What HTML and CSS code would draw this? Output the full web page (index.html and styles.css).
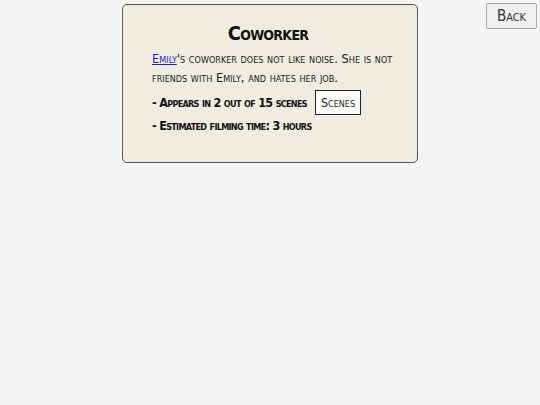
FILE: index.html
```html
<!DOCTYPE html>
<html lang="en">
<head>
  <meta charset="UTF-8" />
  <title>Coworker</title>
  <link rel="stylesheet" href="styles.css">
</head>
<body>

  <button class="back">Back</button>

  <div class="card">
    <h1>Coworker</h1>
    <p class="desc"><a href="#">Emily</a>'s coworker does not like noise. She is not friends with Emily, and hates her job.</p>
    <div class="stat">
      <span>- Appears in 2 out of 15 scenes</span>
      <button class="scenes">Scenes</button>
    </div>
    <div class="stat">
      <span>- Estimated filming time: 3 hours</span>
    </div>
  </div>

</body>
</html>
```

FILE: styles.css
```css
body {
  margin: 0;
  background: #f5f5f5;
  font-family: "DejaVu Sans Condensed", "DejaVu Sans", sans-serif;
  font-stretch: condensed;
  font-variant: small-caps;
  color: #111;
}

.back {
  position: absolute;
  top: 3px;
  right: 3px;
  width: 51px;
  height: 26px;
  background: #f0f0f0;
  border: 1px solid #aaa;
  border-radius: 2px;
  font-family: inherit;
  font-stretch: condensed;
  font-variant: small-caps;
  font-size: 15px;
  color: #333;
  padding: 0;
}

.card {
  width: 255px;
  height: 121px;
  margin: 4px auto 0;
  padding: 13px 10px 23px 29px;
  background: #f0ece0;
  border: 1px solid #555;
  border-radius: 5px;
}

h1 {
  margin: 0 0 0 -23px;
  text-align: center;
  font-size: 20px;
  line-height: 30px;
  letter-spacing: -0.7px;
  font-weight: bold;
}

.desc {
  margin: 1px 0 3px;
  font-size: 12.8px;
  line-height: 19px;
  letter-spacing: 0;
  color: #222;
}

.desc a {
  color: #2222cc;
}

.stat {
  display: flex;
  align-items: center;
  gap: 8px;
  font-size: 12.5px;
  font-weight: bold;
  letter-spacing: -0.7px;
  line-height: 22px;
}

.scenes {
  background: #fff;
  border: 1px solid #222;
  border-radius: 0;
  height: 25px;
  padding: 0 5px;
  font-family: inherit;
  font-stretch: condensed;
  font-variant: small-caps;
  font-size: 12.5px;
  letter-spacing: 0;
  color: #222;
}
```
